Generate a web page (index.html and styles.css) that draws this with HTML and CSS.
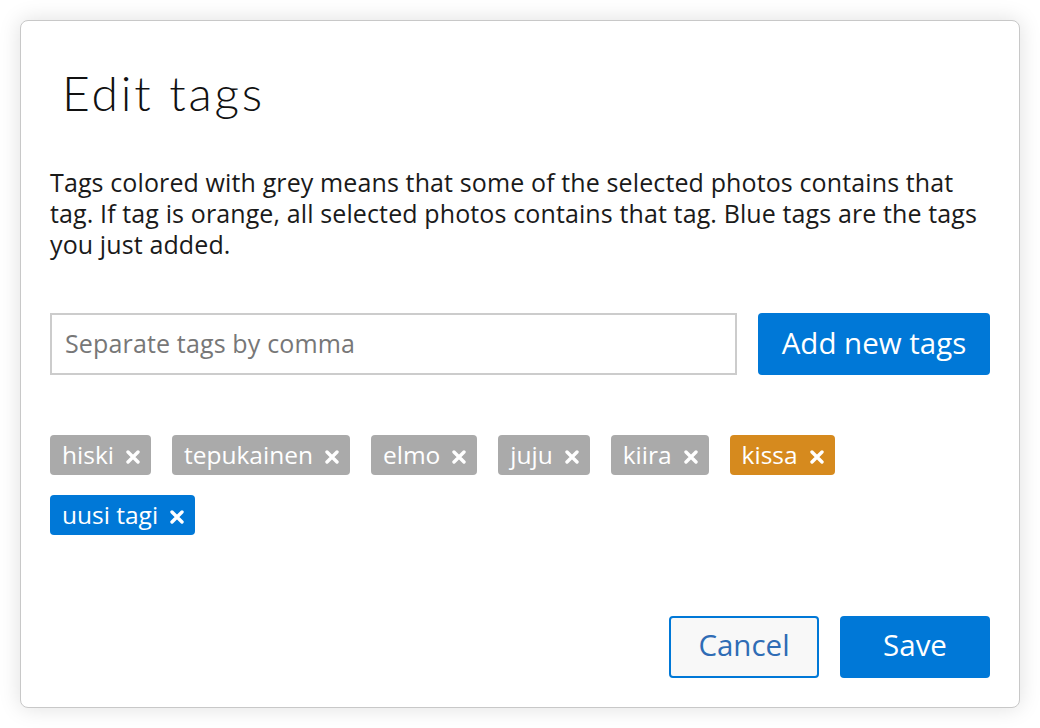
FILE: index.html
```html
<!DOCTYPE html>
<html>
<head>
<meta charset="utf-8">
<link rel="stylesheet" href="styles.css">
</head>
<body>
<div class="modal">
  <h1 class="title">Edit tags</h1>
  <p class="desc">Tags colored with grey means that some of the selected photos contains that tag. If tag is orange, all selected photos contains that tag. Blue tags are the tags you just added.</p>
  <div class="add-row">
    <input class="tag-input" type="text" placeholder="Separate tags by comma">
    <button class="btn btn-primary btn-add">Add new tags</button>
  </div>
  <div class="tags">
    <span class="tag grey">hiski<svg class="x" viewBox="0 0 14 14"><path d="M2 2L12 12M12 2L2 12"/></svg></span>
    <span class="tag grey">tepukainen<svg class="x" viewBox="0 0 14 14"><path d="M2 2L12 12M12 2L2 12"/></svg></span>
    <span class="tag grey">elmo<svg class="x" viewBox="0 0 14 14"><path d="M2 2L12 12M12 2L2 12"/></svg></span>
    <span class="tag grey">juju<svg class="x" viewBox="0 0 14 14"><path d="M2 2L12 12M12 2L2 12"/></svg></span>
    <span class="tag grey">kiira<svg class="x" viewBox="0 0 14 14"><path d="M2 2L12 12M12 2L2 12"/></svg></span>
    <span class="tag orange">kissa<svg class="x" viewBox="0 0 14 14"><path d="M2 2L12 12M12 2L2 12"/></svg></span>
    <span class="tag blue">uusi tagi<svg class="x" viewBox="0 0 14 14"><path d="M2 2L12 12M12 2L2 12"/></svg></span>
  </div>
  <div class="footer">
    <button class="btn btn-outline">Cancel</button>
    <button class="btn btn-primary btn-save">Save</button>
  </div>
</div>
</body>
</html>
```
FILE: styles.css
```css
html, body {
  margin: 0;
  padding: 0;
  background: #ffffff;
}
body {
  padding: 20px;
  font-family: "Open Sans", "Noto Sans", sans-serif;
  color: #1a1a1a;
}
.modal {
  box-sizing: border-box;
  width: 1000px;
  height: 688px;
  border: 1px solid #c8c8c8;
  border-radius: 8px;
  background: #fff;
  box-shadow: 0 0 22px rgba(0, 0, 0, 0.13);
  padding: 0 29px 29px 29px;
  display: flex;
  flex-direction: column;
}
.title {
  font-family: "Lato", "Open Sans", sans-serif;
  font-weight: 300;
  font-size: 48px;
  line-height: 60px;
  margin: 42px 0 0 12px;
  color: #111;
  letter-spacing: 2.8px;
}
.desc {
  font-size: 25px;
  line-height: 31px;
  letter-spacing: 0.12px;
  margin: 44px 0 0 0;
  color: #1a1a1a;
}
.add-row {
  display: flex;
  gap: 21px;
  margin-top: 53px;
}
.tag-input {
  box-sizing: border-box;
  flex: 1;
  height: 62px;
  border: 2px solid #cccccc;
  border-radius: 0;
  padding: 0 13px 3px 13px;
  font-family: inherit;
  font-size: 25px;
  letter-spacing: 0.15px;
  color: #333;
  outline: none;
}
.tag-input::placeholder {
  color: #777777;
}
.btn {
  box-sizing: border-box;
  height: 62px;
  border-radius: 4px;
  font-family: inherit;
  cursor: pointer;
  padding: 0 0 5px 0;
}
.btn-primary {
  background: #0078d7;
  color: #fff;
  border: none;
}
.btn-add {
  width: 232px;
  font-size: 29.5px;
  padding-bottom: 4px;
}
.tags {
  display: flex;
  flex-wrap: wrap;
  column-gap: 21px;
  row-gap: 20px;
  margin-top: 60px;
}
.tag {
  display: inline-flex;
  align-items: baseline;
  height: 40px;
  line-height: 40px;
  border-radius: 4px;
  padding: 0 11px 0 12px;
  font-size: 24.5px;
  color: #fff;
  box-sizing: border-box;
}
.tag.grey { background: #aaaaaa; }
.tag.orange { background: #d68a1e; }
.tag.blue { background: #0078d7; }
.x {
  width: 14px;
  height: 14px;
  margin-left: 12px;
  fill: none;
  stroke: #fff;
  stroke-width: 3.4;
  stroke-linecap: round;
  align-self: center;
  position: relative;
  top: 2px;
}
.footer {
  margin-top: auto;
  display: flex;
  justify-content: flex-end;
  gap: 21px;
}
.btn-outline {
  width: 150px;
  background: #f8f8f8;
  border: 2px solid #0078d7;
  color: #2f6cb5;
  font-size: 29.5px;
}
.btn-save {
  width: 150px;
  font-size: 29.5px;
}
```
